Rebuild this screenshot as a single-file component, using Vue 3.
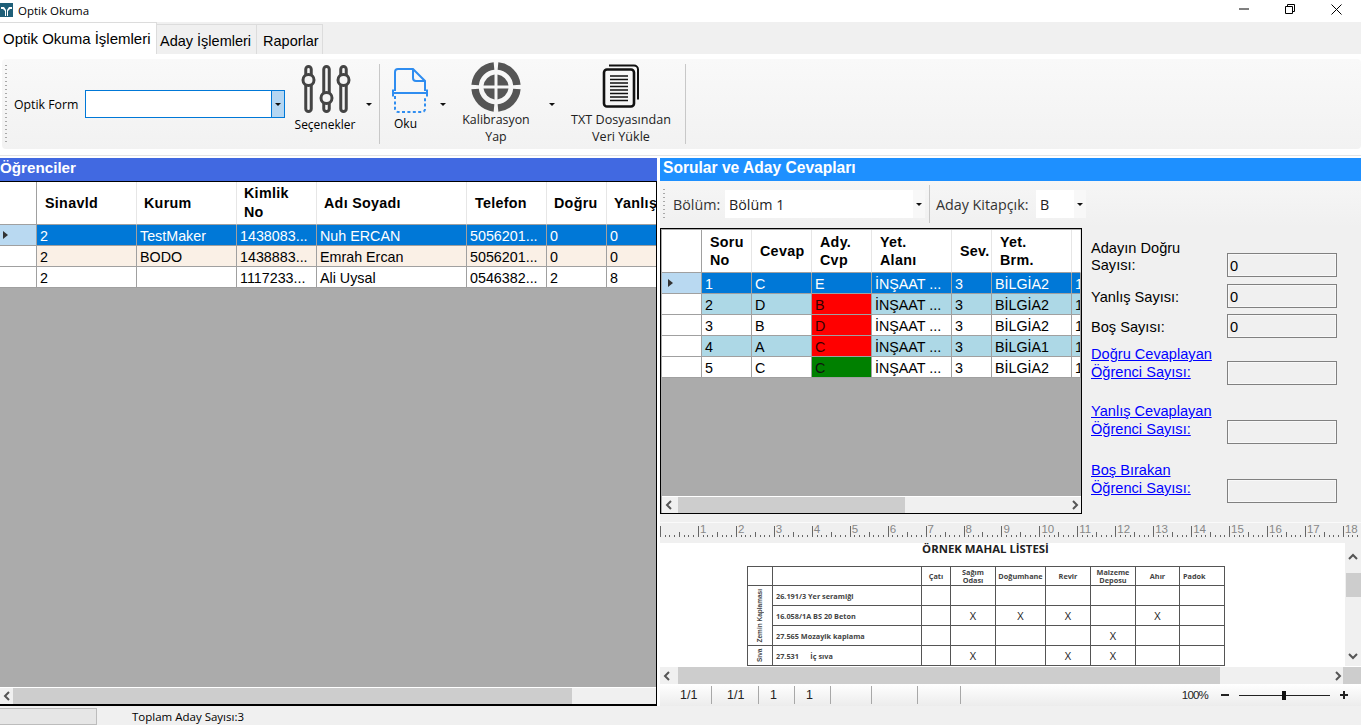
<template>
  <div class="window">
    <div class="titlebar">
      <svg class="appicon" viewBox="0 0 13 14">
        <rect width="13" height="14" fill="#1f5f78" />
        <path d="M1 4h3l2 3v6H5V8L3 6H1zM12 4H9L7 7v6h1V8l2-2h2z" fill="#fff" />
      </svg>
      <span class="apptitle">Optik Okuma</span>
      <div class="winbtns">
        <span class="winbtn">
          <svg width="10" height="2" viewBox="0 0 10 2"><path d="M0 1h10" stroke="#000" /></svg>
        </span>
        <span class="winbtn">
          <svg width="10" height="10" viewBox="0 0 10 10" fill="none" stroke="#000"><path d="M.5 2.5h7v7h-7zM2.5 2.5v-2h7v7h-2" /></svg>
        </span>
        <span class="winbtn">
          <svg width="11" height="11" viewBox="0 0 11 11" stroke="#000" fill="none"><path d="M.5.5l10 10M10.5.5l-10 10" /></svg>
        </span>
      </div>
    </div>

    <div class="tabs">
      <div class="tab active">Optik Okuma İşlemleri</div>
      <div class="tab">Aday İşlemleri</div>
      <div class="tab">Raporlar</div>
    </div>

    <div class="ribbon">
      <div class="ribbonbar">
        <span class="grip"></span>
        <span class="formlabel">Optik Form</span>
        <div class="formcombo"><span class="formdrop"><i class="caret"></i></span></div>

        <div class="tool tool-sec">
          <svg width="50" height="50" viewBox="0 0 50 50" fill="none" stroke="#444" stroke-width="3" overflow="visible">
            <rect x="3.750" y="1.500" width="5.500" height="45" rx="2.750" />
            <rect x="21.750" y="1.500" width="5.500" height="45" rx="2.750" />
            <rect x="38.750" y="1.500" width="5.500" height="45" rx="2.750" />
            <circle cx="6.500" cy="15" r="5.500" fill="#f4f4f4" />
            <circle cx="24.500" cy="33" r="5.500" fill="#f4f4f4" />
            <circle cx="41.500" cy="15" r="5.500" fill="#f4f4f4" />
          </svg>
          <span class="toollabel">Seçenekler</span>
          <i class="caret toolcaret"></i>
        </div>
        <span class="sep"></span>

        <div class="tool tool-oku">
          <svg width="36" height="50" viewBox="0 0 36 50" fill="none" stroke="#2f8df0" stroke-width="2">
            <path d="M3 24V5a3 3 0 0 1 3-3h15l12 12v10" />
            <path d="M21 2v9a3 3 0 0 0 3 3h9" />
            <path d="M1 26h34M1 22.500v7M35 22.500v7" />
            <path d="M3 29v13a3 3 0 0 0 3 3h24a3 3 0 0 0 3-3V29" stroke-dasharray="3 2.400" />
          </svg>
          <span class="toollabel">Oku</span>
          <i class="caret toolcaret"></i>
        </div>

        <div class="tool tool-kal">
          <svg width="50" height="50" viewBox="0 0 50 50" fill="none" stroke="#555">
            <g stroke-width="7.500">
              <path d="M23 4.100A21 21 0 0 0 4.100 23M27 4.100A21 21 0 0 1 45.900 23M45.900 27A21 21 0 0 1 27 45.900M23 45.900A21 21 0 0 1 4.100 27" />
            </g>
            <g fill="#555" stroke="none">
              <path d="M23.500 12.500a13 13 0 0 0-11 11h11zM26.500 12.500a13 13 0 0 1 11 11h-11zM37.500 26.500a13 13 0 0 1-11 11v-11zM23.500 37.500a13 13 0 0 1-11-11h11z" />
            </g>
          </svg>
          <span class="toollabel">Kalibrasyon<br />Yap</span>
          <i class="caret toolcaret"></i>
        </div>

        <div class="tool tool-txt">
          <svg width="38" height="44" viewBox="0 0 38 44" fill="none" stroke="#111">
            <path d="M7 1.500h25a4 4 0 0 1 4 4v30" stroke-width="2" />
            <rect x="2" y="5.500" width="30" height="37" rx="3" stroke-width="2.600" />
            <path d="M8 12h18M8 15.500h18M8 19h18M8 22.500h18M8 26h18M8 29.500h18M8 33h18M8 36.500h18" stroke-width="1.700" />
          </svg>
          <span class="toollabel">TXT Dosyasından<br />Veri Yükle</span>
        </div>
        <span class="sep"></span>
      </div>
    </div>

    <div class="main">
      <section class="leftpane">
        <div class="panehead royal">Öğrenciler</div>
        <div class="gridwrap">
          <div class="grid">
            <div class="gridrow headrow" style="height: 43px">
              <span class="rowhead"></span>
              <span v-for="col in studentCols" :key="col.label" class="cell headcell" :style="{ width: col.w + 'px', paddingLeft: col.pad + 'px' }">
                <b v-html="col.label"></b>
              </span>
            </div>
            <div v-for="(row, i) in students" :key="i" class="gridrow" :class="row.cls">
              <span class="rowhead" :class="{ current: i === 0 }"><i v-if="i === 0" class="rowmark"></i></span>
              <span v-for="(val, j) in row.cells" :key="j" class="cell" :style="{ width: studentCols[j].w + 'px' }">{{ val }}</span>
            </div>
          </div>
          <div class="hscroll">
            <span class="arrow"><svg width="8" height="10" viewBox="0 0 8 10" fill="none" stroke="#555" stroke-width="2"><path d="M6 1L2 5l4 4" /></svg></span>
            <span class="thumb left-thumb"></span>
          </div>
        </div>
      </section>

      <section class="rightpane">
        <div class="panehead dodger">Sorular ve Aday Cevapları</div>
        <div class="righttool">
          <span class="grip short"></span>
          <span class="rtlabel">Bölüm:</span>
          <div class="rtcombo wide">Bölüm 1<span class="rtdrop"><i class="caret"></i></span></div>
          <span class="sep short"></span>
          <span class="rtlabel second">Aday Kitapçık:</span>
          <div class="rtcombo narrow">B<span class="rtdrop"><i class="caret"></i></span></div>
        </div>

        <div class="midrow">
          <div class="qgrid">
            <div class="qinner">
              <div class="gridrow headrow" style="height: 43px">
                <span class="rowhead q"></span>
                <span v-for="col in questionCols" :key="col.label" class="cell headcell qhead" :style="{ width: col.w + 'px' }">
                  <b v-html="col.label"></b>
                </span>
              </div>
              <div v-for="(row, i) in questions" :key="i" class="gridrow" :class="rowClass(i)">
                <span class="rowhead q" :class="{ current: i === 0 }"><i v-if="i === 0" class="rowmark"></i></span>
                <span v-for="(val, j) in row.cells" :key="j" class="cell" :class="j === 2 ? row.mark : ''" :style="{ width: questionCols[j].w + 'px' }">{{ val }}</span>
              </div>
            </div>
            <div class="hscroll">
              <span class="arrow"><svg width="8" height="10" viewBox="0 0 8 10" fill="none" stroke="#555" stroke-width="2"><path d="M6 1L2 5l4 4" /></svg></span>
              <span class="thumb q-thumb"></span>
              <span class="arrow end"><svg width="8" height="10" viewBox="0 0 8 10" fill="none" stroke="#555" stroke-width="2"><path d="M2 1l4 4-4 4" /></svg></span>
            </div>
          </div>

          <div class="stats">
            <div class="stat s1"><span>Adayın Doğru<br />Sayısı:</span><span class="box">0</span></div>
            <div class="stat s2"><span>Yanlış Sayısı:</span><span class="box">0</span></div>
            <div class="stat s3"><span>Boş Sayısı:</span><span class="box">0</span></div>
            <div class="stat s4"><a>Doğru Cevaplayan <br />Öğrenci Sayısı:</a><span class="box"></span></div>
            <div class="stat s5"><a>Yanlış Cevaplayan <br />Öğrenci Sayısı:</a><span class="box"></span></div>
            <div class="stat s5"><a>Boş Bırakan <br />Öğrenci Sayısı:</a><span class="box"></span></div>
          </div>
        </div>

        <div class="ruler">
          <svg width="701" height="15" viewBox="0 0 701 15">
            <path :d="rulerPath" stroke="#666" fill="none" />
            <text v-for="n in 18" :key="n" :x="n * 37.940 + 2" y="10" class="rulernum">{{ n }}</text>
          </svg>
        </div>

        <div class="viewer">
          <div class="page">
            <div class="pagetitle">ÖRNEK MAHAL LİSTESİ</div>
            <table class="mahal">
              <colgroup>
                <col style="width: 25px" /><col style="width: 149px" /><col style="width: 29px" /><col style="width: 45px" />
                <col style="width: 50px" /><col style="width: 45px" /><col style="width: 45px" /><col style="width: 44px" /><col style="width: 45px" />
              </colgroup>
              <tr class="r1">
                <td></td><td></td><td>Çatı</td><td>Sağım<br />Odası</td><td>Doğumhane</td><td>Revir</td><td>Malzeme<br />Deposu</td><td>Ahır</td><td class="padok">Padok</td>
              </tr>
              <tr>
                <td rowspan="3" class="vert"><span>Zemin Kaplaması</span></td>
                <td class="item">26.191/3 Yer seramiği</td><td></td><td></td><td></td><td></td><td></td><td></td><td></td>
              </tr>
              <tr>
                <td class="item">16.058/1A BS 20 Beton</td><td></td><td class="x">X</td><td class="x">X</td><td class="x">X</td><td></td><td class="x">X</td><td></td>
              </tr>
              <tr>
                <td class="item">27.565 Mozayik kaplama</td><td></td><td></td><td></td><td></td><td class="x">X</td><td></td><td></td>
              </tr>
              <tr>
                <td class="vert cut"><span>Sıva</span></td>
                <td class="item">27.531 &nbsp; &nbsp; &nbsp;İç sıva</td><td></td><td class="x">X</td><td></td><td class="x">X</td><td class="x">X</td><td></td><td></td>
              </tr>
            </table>
          </div>
          <div class="vscroll">
            <span class="varrow"><svg width="10" height="8" viewBox="0 0 10 8" fill="none" stroke="#555" stroke-width="2"><path d="M1 6l4-4 4 4" /></svg></span>
            <span class="vthumb"></span>
            <span class="varrow bottom"><svg width="10" height="8" viewBox="0 0 10 8" fill="none" stroke="#555" stroke-width="2"><path d="M1 2l4 4 4-4" /></svg></span>
          </div>
        </div>

        <div class="hscroll viewerscroll">
          <span class="arrow"><svg width="8" height="10" viewBox="0 0 8 10" fill="none" stroke="#555" stroke-width="2"><path d="M6 1L2 5l4 4" /></svg></span>
          <span class="thumb v-thumb"></span>
          <span class="arrow end"><svg width="8" height="10" viewBox="0 0 8 10" fill="none" stroke="#555" stroke-width="2"><path d="M2 1l4 4-4 4" /></svg></span>
          <span class="corner"></span>
        </div>

        <div class="viewerstatus">
          <span v-for="(p, i) in pagerCells" :key="i" class="vs" :style="{ width: p.w + 'px', paddingLeft: p.pad + 'px' }">{{ p.text }}</span>
          <span class="zoomtxt">100%</span>
          <span class="minus"></span>
          <span class="slider"><i></i></span>
          <span class="plus"></span>
        </div>
      </section>
    </div>

    <div class="statusbar">
      <span class="progress"></span>
      <span class="total">Toplam Aday Sayısı:3</span>
    </div>
  </div>
</template>

<script setup>
const studentCols = [
  { label: 'Sinavld', w: 100, pad: 8 },
  { label: 'Kurum', w: 100, pad: 7 },
  { label: 'Kimlik<br>No', w: 80, pad: 7 },
  { label: 'Adı Soyadı', w: 150, pad: 7 },
  { label: 'Telefon', w: 80, pad: 8 },
  { label: 'Doğru', w: 60, pad: 7 },
  { label: 'Yanlış', w: 50, pad: 7 }
]

const students = [
  { cls: 'selected', cells: ['2', 'TestMaker', '1438083...', 'Nuh ERCAN', '5056201...', '0', '0'] },
  { cls: 'linen', cells: ['2', 'BODO', '1438883...', 'Emrah Ercan', '5056201...', '0', '0'] },
  { cls: '', cells: ['2', '', '1117233...', 'Ali Uysal', '0546382...', '2', '8'] }
]

const questionCols = [
  { label: 'Soru<br>No', w: 50 },
  { label: 'Cevap', w: 60 },
  { label: 'Ady.<br>Cvp', w: 60 },
  { label: 'Yet.<br>Alanı', w: 80 },
  { label: 'Sev.', w: 40 },
  { label: 'Yet.<br>Brm.', w: 80 },
  { label: '', w: 9 }
]

const questions = [
  { mark: '', cells: ['1', 'C', 'E', 'İNŞAAT ...', '3', 'BİLGİA2', '1'] },
  { mark: 'red', cells: ['2', 'D', 'B', 'İNŞAAT ...', '3', 'BİLGİA2', '1'] },
  { mark: 'red', cells: ['3', 'B', 'D', 'İNŞAAT ...', '3', 'BİLGİA2', '1'] },
  { mark: 'red', cells: ['4', 'A', 'C', 'İNŞAAT ...', '3', 'BİLGİA1', '1'] },
  { mark: 'green', cells: ['5', 'C', 'C', 'İNŞAAT ...', '3', 'BİLGİA2', '1'] }
]

const pagerCells = [
  { w: 52, pad: 20, text: '1/1' },
  { w: 47, pad: 15, text: '1/1' },
  { w: 36, pad: 11, text: '1' },
  { w: 36, pad: 11, text: '1' },
  { w: 41, pad: 0, text: '' },
  { w: 46, pad: 0, text: '' },
  { w: 43, pad: 0, text: '' }
]

function rowClass(i) {
  if (i === 0) return 'selected'
  return i % 2 === 1 ? 'lightblue' : ''
}

// cetvel cizgileri: 1 cm = 37.94px, her cm'de 8 bolme
let d = ''
for (let i = 0; i < 150; i++) {
  const x = Math.round(i * 37.94 / 8) + 0.5
  if (x > 700) break
  const h = i % 8 === 0 ? 11 : i % 4 === 0 ? 5 : 2
  d += `M${x} 14v-${h}`
}
const rulerPath = d
</script>

<style>
html, body {
  margin: 0;
  height: 100%;
  overflow: hidden;
  background: #f0f0f0;
}
</style>

<style scoped>
.window {
  width: 1361px;
  height: 725px;
  display: flex;
  flex-direction: column;
  font-family: "Liberation Sans", Arial, sans-serif;
  color: #000;
  background: #f0f0f0;
  overflow: hidden;
}

.titlebar {
  height: 22px;
  flex: none;
  background: #fff;
  display: flex;
  align-items: center;
}
.appicon {
  width: 13px;
  height: 14px;
  margin-right: 5px;
  margin-top: -2px;
}
.apptitle {
  font-family: "Open Sans", sans-serif;
  font-size: 11.5px;
  margin-top: -1px;
}
.winbtns {
  margin-left: auto;
  display: flex;
}
.winbtn {
  width: 46px;
  height: 22px;
  display: flex;
  align-items: center;
  justify-content: center;
  margin-top: -4px;
}
.winbtn:last-child {
  margin-right: 2px;
}

.tabs {
  height: 32px;
  flex: none;
  display: flex;
  align-items: flex-end;
  background: #f0f0f0;
  font-size: 14.5px;
}
.tab {
  height: 30px;
  padding: 0 5px 0 3px;
  line-height: 33px;
  border: 1px solid #dcdcdc;
  border-bottom: 0;
  border-left: 0;
  box-sizing: border-box;
  background: #f0f0f0;
}
.tab:last-child {
  padding: 0 3px 0 6px;
}
.tab.active {
  height: 32px;
  width: 157px;
  background: #fff;
  padding: 0 0 0 3px;
  line-height: 32px;
  font-size: 15px;
}

.ribbon {
  height: 102px;
  flex: none;
  box-sizing: border-box;
  background: #fff;
  padding: 5px 0 6px;
  border-bottom: 1px solid #e4e4e4;
}
.ribbonbar {
  height: 100%;
  margin-left: 2px;
  border-radius: 4px;
  background: linear-gradient(#f9f9f9, #f2f2f2);
  display: flex;
  align-items: center;
  position: relative;
  font-family: "Open Sans", sans-serif;
  font-size: 12px;
}
.grip {
  width: 2px;
  height: 78px;
  margin-left: 3px;
  background: repeating-linear-gradient(#a8a8a8 0 1.500px, transparent 1.500px 4px);
}
.formlabel {
  margin-left: 7px;
  width: 71px;
  flex: none;
  font-size: 12.3px;
}
.formcombo {
  width: 198px;
  height: 26px;
  border: 1px solid #0078d7;
  background: #fff;
  display: flex;
  justify-content: flex-end;
}
.formdrop {
  width: 12px;
  background: #b4d6f2;
  border-left: 1px solid #0078d7;
  display: flex;
  align-items: center;
  justify-content: center;
}
.caret {
  display: block;
  width: 0;
  height: 0;
  border-left: 3px solid transparent;
  border-right: 3px solid transparent;
  border-top: 3px solid #111;
}
.tool {
  position: relative;
  height: 90px;
  flex: none;
  text-align: center;
  display: flex;
  flex-direction: column;
  align-items: center;
}
.tool svg {
  flex: none;
}
.toollabel {
  line-height: 17px;
  white-space: nowrap;
}
.toolcaret {
  position: absolute;
}
.tool-sec {
  width: 87px;
  margin-left: 7px;
}
.tool-sec svg {
  margin: 6px 0 0 -18px;
}
.tool-sec .toollabel {
  margin: 1px 0 0 -21px;
}
.tool-sec .toolcaret {
  right: 7px;
  top: 44px;
}
.sep {
  width: 1px;
  height: 80px;
  background: #c8c8c8;
  flex: none;
}
.tool-oku {
  width: 61px;
}
.tool-oku svg {
  margin: 8px 0 0 -2px;
}
.tool-oku .toollabel {
  margin: -2px 0 0 -10px;
}
.tool-oku .toolcaret {
  right: -5px;
  top: 44px;
}
.tool-kal {
  width: 110px;
}
.tool-kal svg {
  margin: 3px 0 0 0;
}
.tool-kal .toollabel {
  margin-top: -1px;
  color: #222;
  font-size: 12.4px;
}
.tool-kal .toolcaret {
  right: -4px;
  top: 44px;
}
.tool-txt {
  width: 134px;
}
.tool-txt svg {
  margin: 5px 0 0 6px;
}
.tool-txt .toollabel {
  margin: 3px 0 0 6px;
  color: #222;
  font-size: 12.6px;
}

.main {
  height: 550px;
  flex: none;
  display: flex;
  background: #fff;
  padding-top: 2px;
  box-sizing: border-box;
}
.leftpane {
  width: 657px;
  flex: none;
  display: flex;
  flex-direction: column;
}
.rightpane {
  width: 701px;
  margin-left: 3px;
  flex: none;
  display: flex;
  flex-direction: column;
  background: #f0f0f0;
}
.panehead {
  height: 23px;
  flex: none;
  color: #fff;
  font-size: 15.2px;
  font-weight: bold;
  line-height: 20px;
}
.royal {
  background: #4169e1;
}
.dodger {
  background: #1e90ff;
  padding-left: 3px;
  font-size: 15.600px;
}

.gridwrap {
  flex: 1;
  display: flex;
  flex-direction: column;
  border-top: 1px solid #000;
  border-bottom: 2px solid #000;
  border-right: 1px solid #000;
  background: #ababab;
  min-height: 0;
}
.grid {
  flex: 1;
  overflow: hidden;
  min-height: 0;
}
.gridrow {
  height: 21px;
  display: flex;
  white-space: nowrap;
  font-size: 14.3px;
  background: #fff;
}
.headrow {
  background: #fff;
}
.rowhead {
  width: 37px;
  flex: none;
  box-sizing: border-box;
  border-right: 1px solid #a0a0a0;
  border-bottom: 1px solid #a0a0a0;
  background: #fff;
  display: flex;
  align-items: center;
  padding-left: 3px;
}
.rowhead.q {
  width: 40px;
  padding-left: 6px;
}
.rowhead.current {
  background: #b9d9f1;
}
.rowmark {
  display: block;
  width: 0;
  height: 0;
  border-top: 4px solid transparent;
  border-bottom: 4px solid transparent;
  border-left: 5px solid #333;
}
.cell {
  flex: none;
  box-sizing: border-box;
  border-right: 1px solid #a0a0a0;
  border-bottom: 1px solid #a0a0a0;
  padding: 0 0 0 3px;
  line-height: 22px;
  overflow: hidden;
}
.headcell {
  display: flex;
  align-items: center;
  padding-left: 8px;
  line-height: 19px;
  border-right-color: #e6e6e6;
  letter-spacing: 0.3px;
}
.headrow .rowhead {
  border-right-color: #a0a0a0;
}
.qhead {
  padding-left: 8px;
  line-height: 18px;
}
.selected {
  color: #fff;
  background: #0078d7;
}
.linen {
  background: #faf0e6;
}
.lightblue {
  background: #add8e6;
}
.selected .rowhead,
.linen .rowhead,
.lightblue .rowhead {
  color: #000;
}
.red {
  background: #ff0000;
  color: #300;
}
.green {
  background: #008000;
  color: #111;
}

.hscroll {
  height: 16px;
  flex: none;
  display: flex;
  align-items: stretch;
  background: #f0f0f0;
  border-top: 1px solid #fff;
}
.arrow {
  width: 13px;
  flex: none;
  display: flex;
  align-items: center;
  justify-content: center;
}
.arrow.end {
  margin-left: auto;
}
.thumb {
  background: #cdcdcd;
}
.left-thumb {
  width: 559px;
}
.q-thumb {
  width: 227px;
  margin-left: 3px;
}

.righttool {
  height: 46px;
  flex: none;
  display: flex;
  align-items: center;
  background: linear-gradient(#f6f6f6, #f0f0f0);
  font-size: 14.5px;
  color: #333;
}
.grip.short {
  height: 30px;
  margin-left: 3px;
}
.rtlabel {
  margin-left: 8px;
  width: 52px;
  flex: none;
  margin-top: 1px;
  font-family: "Open Sans", sans-serif;
  font-size: 14.3px;
}
.rtlabel.second {
  width: 100px;
  margin-left: 6px;
}
.rtcombo {
  height: 28px;
  background: #fff;
  display: flex;
  align-items: center;
  box-sizing: border-box;
  padding-left: 4px;
  font-family: "Open Sans", sans-serif;
  font-size: 14.3px;
  color: #222;
  flex: none;
  position: relative;
}
.rtcombo.wide {
  width: 200px;
}
.rtcombo.narrow {
  width: 50px;
}
.rtdrop {
  position: absolute;
  right: 0;
  top: 0;
  bottom: 0;
  width: 12px;
  background: #f8f8f8;
  display: flex;
  align-items: center;
  justify-content: center;
}
.sep.short {
  height: 38px;
  margin-left: 4px;
}

.midrow {
  height: 288px;
  flex: none;
  display: flex;
}
.qgrid {
  width: 422px;
  height: 286px;
  flex: none;
  box-sizing: border-box;
  border: 1px solid #000;
  margin-top: 1px;
  background: #ababab;
  display: flex;
  flex-direction: column;
  padding: 1px 0 0 1px;
}
.qinner {
  flex: 1;
  min-height: 0;
  overflow: hidden;
}
.stats {
  flex: 1;
  padding-left: 9px;
  padding-top: 6px;
  font-size: 14.6px;
}
.stat {
  width: 246px;
  display: flex;
  justify-content: space-between;
  align-items: flex-end;
  line-height: 18px;
}
.stat a {
  color: #0000ff;
  text-decoration: underline;
  line-height: 18px;
}
.box {
  width: 110px;
  height: 24px;
  box-sizing: border-box;
  border: 1px solid #808080;
  background: #f0f0f0;
  box-shadow: inset 0 0 0 1px #f8f8f8;
  padding-left: 2px;
  line-height: 24px;
  flex: none;
}
.s1 {
  height: 44px;
}
.s1 span:first-child {
  margin-bottom: 3px;
  line-height: 17px;
}
.s2 {
  margin-top: 7px;
  height: 24px;
  align-items: center;
}
.s3 {
  margin-top: 6px;
  height: 24px;
  align-items: center;
}
.s2 span:first-child,
.s3 span:first-child {
  margin-top: 2px;
}
.s4 {
  margin-top: 3px;
  height: 44px;
}
.s5 {
  margin-top: 15px;
  height: 44px;
}
.s4 a {
  margin-bottom: 4px;
}
.s5 a {
  margin-bottom: 6px;
}

.ruler {
  height: 15px;
  flex: none;
  margin-top: 7px;
  background: #efefef;
  border-top: 1px solid #fafafa;
  overflow: hidden;
}
.rulernum {
  font-size: 11.5px;
  fill: #888;
  font-family: "Liberation Sans", sans-serif;
}

.viewer {
  height: 123px;
  flex: none;
  margin-top: 5px;
  background: #fff;
  display: flex;
  overflow: hidden;
}
.page {
  width: 685px;
  flex: none;
  padding-left: 87px;
  box-sizing: border-box;
  color: #222;
}
.pagetitle {
  font-family: "Open Sans", sans-serif;
  font-weight: 700;
  font-size: 11.400px;
  width: 477px;
  text-align: center;
  line-height: 12px;
  height: 23px;
}
.mahal {
  border-collapse: collapse;
  table-layout: fixed;
  width: 477px;
  font-family: "Open Sans", sans-serif;
  font-size: 7.300px;
  line-height: 8px;
  border: 1px solid #777;
}
.mahal td {
  border: 1px solid #555;
  padding: 0;
  text-align: center;
  height: 19px;
  color: #444;
  white-space: nowrap;
}
.mahal td.item {
  text-align: left;
  padding-left: 3px;
  font-weight: 700;
}
.mahal td.padok {
  text-align: left;
  padding-left: 3px;
}
.mahal .r1 td {
  font-weight: 700;
  height: 18px;
}
.mahal td.x {
  font-size: 11px;
  font-weight: 400;
  color: #222;
}
.vert span {
  display: block;
  writing-mode: vertical-rl;
  transform: rotate(180deg);
  margin: 0 auto;
  font-family: "Liberation Sans Narrow", "Liberation Sans", sans-serif;
  font-size: 6.500px;
  font-weight: 700;
}
.vert.cut span {
  height: 17px;
  overflow: hidden;
}
.vscroll {
  width: 16px;
  flex: none;
  background: #f0f0f0;
  display: flex;
  flex-direction: column;
  align-items: center;
  position: relative;
}
.varrow {
  height: 16px;
  display: flex;
  align-items: center;
  justify-content: center;
  flex: none;
  margin-top: 6px;
}
.varrow.bottom {
  margin-top: auto;
  margin-bottom: 2px;
}
.vthumb {
  width: 15px;
  height: 24px;
  background: #cdcdcd;
  margin-top: 8px;
}

.viewerscroll {
  height: 17px;
  position: relative;
}
.viewerscroll .arrow.end {
  margin-right: 17px;
}
.corner {
  position: absolute;
  right: 0;
  top: 0;
  bottom: 0;
  width: 18px;
  background: #cdcdcd;
}
.v-thumb {
  width: 542px;
  margin-left: 5px;
  flex: none;
}

.viewerstatus {
  height: 23px;
  flex: none;
  box-sizing: border-box;
  display: flex;
  align-items: center;
  background: linear-gradient(#ffffff, #ececec);
  border-bottom: 1px solid #dcdcdc;
  font-size: 12.500px;
  color: #222;
}
.vs {
  height: 18px;
  box-sizing: border-box;
  border-right: 1px solid #a8a8a8;
  line-height: 18px;
  flex: none;
}
.zoomtxt {
  margin-left: auto;
  margin-right: 13px;
  font-size: 11.500px;
  letter-spacing: -0.8px;
}
.minus {
  width: 8px;
  height: 2px;
  background: #222;
  flex: none;
}
.slider {
  width: 91px;
  height: 1px;
  background: #222;
  margin: 0 10px 0 10px;
  position: relative;
  flex: none;
}
.slider i {
  position: absolute;
  left: 43px;
  top: -4px;
  width: 4px;
  height: 9px;
  background: #111;
}
.plus {
  width: 8px;
  height: 8px;
  flex: none;
  margin-right: 13px;
  background:
    linear-gradient(#222, #222) center / 8px 2px no-repeat,
    linear-gradient(#222, #222) center / 2px 8px no-repeat;
}

.statusbar {
  height: 19px;
  flex: none;
  display: flex;
  align-items: center;
  background: #f0f0f0;
  font-family: "Open Sans", sans-serif;
  font-size: 11.500px;
  padding-top: 1px;
  box-sizing: border-box;
}
.progress {
  width: 96px;
  height: 15px;
  background: #e6e6e6;
  border: 1px solid #bcbcbc;
  border-left: 0;
  flex: none;
}
.total {
  margin-left: 35px;
}
</style>
